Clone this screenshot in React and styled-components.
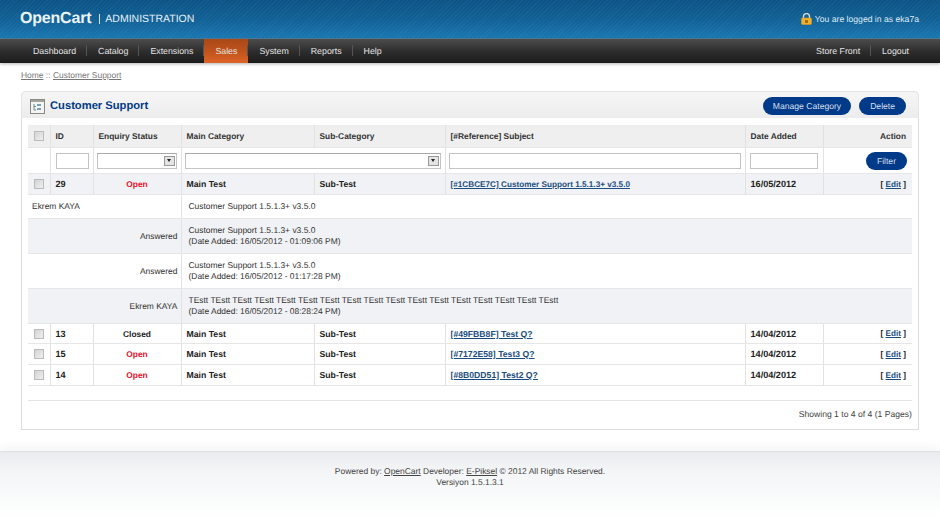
import React from 'react';
import styled, { createGlobalStyle } from 'styled-components';

const tickets = [
  { id: 13, status: 'Closed', ref: '[#49FBB8F] Test Q?', date: '14/04/2012' },
  { id: 15, status: 'Open', ref: '[#7172E58] Test3 Q?', date: '14/04/2012' },
  { id: 14, status: 'Open', ref: '[#8B0DD51] Test2 Q?', date: '14/04/2012' },
];

const replies = [
  { who: 'Ekrem KAYA', left: true, height: 24, lines: ['Customer Support 1.5.1.3+ v3.5.0'] },
  { who: 'Answered', shade: true, height: 35, lines: ['Customer Support 1.5.1.3+ v3.5.0', '(Date Added: 16/05/2012 - 01:09:06 PM)'] },
  { who: 'Answered', height: 35, lines: ['Customer Support 1.5.1.3+ v3.5.0', '(Date Added: 16/05/2012 - 01:17:28 PM)'] },
  { who: 'Ekrem KAYA', shade: true, height: 35, lines: ['TEstt TEstt TEstt TEstt TEstt TEstt TEstt TEstt TEstt TEstt TEstt TEstt TEstt TEstt TEstt TEstt TEstt', '(Date Added: 16/05/2012 - 08:28:24 PM)'] },
];

function LockIcon() {
  return (
    <svg width="11" height="12" viewBox="0 0 11 12">
      <path d="M2.5 6V3.6a3 3 0 0 1 6 0V6" fill="none" stroke="#d8d8d0" strokeWidth="1.4" />
      <rect x="0.5" y="5" width="10" height="6.5" rx="1" fill="#f0b030" stroke="#d99a20" strokeWidth="0.6" />
      <rect x="4" y="7" width="3" height="3" fill="#a86d10" />
    </svg>
  );
}

function PageIcon() {
  return (
    <svg width="15" height="15" viewBox="0 0 15 15">
      <rect x="0.5" y="0.5" width="14" height="14" fill="#f4f4f2" stroke="#8a8a84" />
      <rect x="1" y="1" width="13" height="2" fill="#a4a49e" />
      <path d="M4 5v6h2M4 7.5h2" fill="none" stroke="#6f8796" strokeWidth="1" />
      <rect x="7" y="5" width="4" height="2" fill="#7da0b4" />
      <rect x="7" y="9" width="4" height="2" fill="#7da0b4" />
    </svg>
  );
}

function App() {
  return (
    <Page>
      <GlobalStyle />
      <Header>
        <Brand>
          <Logo>OpenCart</Logo>
          <Admin>ADMINISTRATION</Admin>
        </Brand>
        <Logged>
          <LockIcon />
          You are logged in as eka7a
        </Logged>
      </Header>
      <Nav>
        <NavGroup>
          {['Dashboard', 'Catalog', 'Extensions', 'Sales', 'System', 'Reports', 'Help'].map((item) => (
            <NavItem key={item} $active={item === 'Sales'}>{item}</NavItem>
          ))}
        </NavGroup>
        <NavGroup>
          <NavItem>Store Front</NavItem>
          <NavItem>Logout</NavItem>
        </NavGroup>
      </Nav>
      <Content>
        <Breadcrumb>
          <a href="#home">Home</a> :: <a href="#support">Customer Support</a>
        </Breadcrumb>
        <Box>
          <Heading>
            <Title>
              <PageIcon />
              <h1>Customer Support</h1>
            </Title>
            <Buttons>
              <Button>Manage Category</Button>
              <Button $wide>Delete</Button>
            </Buttons>
          </Heading>
          <BoxBody>
            <List>
              <colgroup>
                <col style={{ width: 22 }} />
                <col style={{ width: 43 }} />
                <col style={{ width: 88 }} />
                <col style={{ width: 133 }} />
                <col style={{ width: 131 }} />
                <col style={{ width: 300 }} />
                <col style={{ width: 78 }} />
                <col style={{ width: 89 }} />
              </colgroup>
              <thead>
                <HeadRow>
                  <Cell $center><Check type="checkbox" /></Cell>
                  <Cell>ID</Cell>
                  <Cell>Enquiry Status</Cell>
                  <Cell>Main Category</Cell>
                  <Cell>Sub-Category</Cell>
                  <Cell>[#Reference] Subject</Cell>
                  <Cell>Date Added</Cell>
                  <Cell $right>Action</Cell>
                </HeadRow>
              </thead>
              <tbody>
                <FilterRow>
                  <Cell />
                  <FilterCell $l={5} $r={4}><TextInput /></FilterCell>
                  <FilterCell><SelectBox><select /><SelectArrow /></SelectBox></FilterCell>
                  <FilterCell colSpan={2}><SelectBox><select /><SelectArrow /></SelectBox></FilterCell>
                  <FilterCell><TextInput /></FilterCell>
                  <FilterCell $l={4} $r={5}><TextInput /></FilterCell>
                  <FilterCell $r={5}><FilterAction><Button $wide>Filter</Button></FilterAction></FilterCell>
                </FilterRow>
                <TicketRow $shade $height={21}>
                  <Cell $center><Check type="checkbox" /></Cell>
                  <NumCell>29</NumCell>
                  <Status $open>Open</Status>
                  <Cell>Main Test</Cell>
                  <Cell>Sub-Test</Cell>
                  <Cell><Subject href="#t29" $tight>[#1CBCE7C] Customer Support 1.5.1.3+ v3.5.0</Subject></Cell>
                  <NumCell>16/05/2012</NumCell>
                  <ActionCell $right>[ <a href="#e29">Edit</a> ]</ActionCell>
                </TicketRow>
                {replies.map((reply, i) => (
                  <ReplyRow key={i} $shade={reply.shade} $height={reply.height}>
                    <Who colSpan={3} $left={reply.left}>{reply.who}</Who>
                    <Message colSpan={5}>
                      {reply.lines.map((line) => <div key={line}>{line}</div>)}
                    </Message>
                  </ReplyRow>
                ))}
                {tickets.map((t) => (
                  <TicketRow key={t.id} $height={t.id === 13 ? 20 : 21}>
                    <Cell $center><Check type="checkbox" /></Cell>
                    <NumCell>{t.id}</NumCell>
                    <Status $open={t.status === 'Open'}>{t.status}</Status>
                    <Cell>Main Test</Cell>
                    <Cell>Sub-Test</Cell>
                    <Cell><Subject href="#t">{t.ref}</Subject></Cell>
                    <NumCell>{t.date}</NumCell>
                    <ActionCell $right>[ <a href="#e">Edit</a> ]</ActionCell>
                  </TicketRow>
                ))}
              </tbody>
            </List>
            <Pagination>Showing 1 to 4 of 4 (1 Pages)</Pagination>
          </BoxBody>
        </Box>
      </Content>
      <Footer>
        <div>Powered by: <a href="#oc">OpenCart</a> Developer: <a href="#ep">E-Piksel</a> © 2012 All Rights Reserved.</div>
        <div>Versiyon 1.5.1.3.1</div>
      </Footer>
    </Page>
  );
}

export default App;

const GlobalStyle = createGlobalStyle`
html, body {
  margin: 0;
  padding: 0;
  background: #fff;
}
body {
  font-family: "Liberation Sans", Arial, sans-serif;
  font-size: 8.45px;
  text-rendering: geometricPrecision;
  color: #222;
}
`;

const Page = styled.div`
height: 525px;
display: flex;
flex-direction: column;
overflow: hidden;
`;

const Header = styled.div`
height: 38px;
padding: 0 21px 0 20px;
display: flex;
align-items: center;
justify-content: space-between;
background:
  repeating-linear-gradient(135deg, rgba(255,255,255,0.035) 0 1px, transparent 1px 3px),
  linear-gradient(to bottom, #0d5486 0%, #116095 50%, #1a77b2 100%);
border-bottom: 1px solid #4e7f9c;
`;

const Brand = styled.div`
display: flex;
align-items: center;
color: #fff;
`;

const Logo = styled.div`
font-size: 16px;
font-weight: bold;
letter-spacing: -0.2px;
color: #eaf3f9;
`;

const Admin = styled.div`
margin-left: 8px;
padding-left: 5px;
border-left: 1px solid #cfe0ec;
font-size: 10.5px;
line-height: 10px;
color: #e6f0f7;
`;

const Logged = styled.div`
display: flex;
align-items: center;
gap: 3px;
font-size: 8.65px;
color: #dde9f2;
`;

const Nav = styled.div`
height: 24px;
padding: 0 20px 0 22px;
display: flex;
justify-content: space-between;
font-size: 8.8px;
background: linear-gradient(to bottom, #4c4c4c 0%, #2e2e2e 50%, #1c1c1c 100%);
box-shadow: 0 1px 3px rgba(0, 0, 0, 0.3);
`;

const NavGroup = styled.div`
display: flex;
`;

const NavItem = styled.div`
padding: 0 11px;
line-height: 24px;
color: #e4e4e4;
background: ${(p) => (p.$active ? 'linear-gradient(to bottom, #a84818 0%, #c2541c 55%, #dc6428 100%)' : 'none')};
position: relative;
&:not(:last-child)::after {
  content: "";
  position: absolute;
  right: 0;
  top: 6px;
  height: 11px;
  border-right: 1px solid #555;
}
`;

const Content = styled.div`
padding: 7px 21px 0;
flex: 0 0 388px;
box-sizing: border-box;
`;

const Breadcrumb = styled.div`
height: 21px;
line-height: 10px;
color: #888;
a {
  color: #777;
}
`;

const Box = styled.div`
width: 898px;
box-sizing: border-box;
height: 339px;
border: 1px solid #dcdcdc;
border-top: none;
border-radius: 5px 5px 0 0;
`;

const Heading = styled.div`
height: 27px;
margin: 0 -1px;
padding: 2px 12px 0 8px;
display: flex;
align-items: center;
justify-content: space-between;
background: linear-gradient(to bottom, #f6f6f6, #ececec);
border: 1px solid #e4e4e4;
border-bottom: none;
border-radius: 5px 5px 0 0;
box-sizing: border-box;
`;

const Title = styled.div`
display: flex;
align-items: center;
gap: 5px;
h1 {
  margin: 0;
  font-size: 11.2px;
  font-weight: bold;
  color: #003a88;
}
`;

const Buttons = styled.div`
display: flex;
gap: 8px;
`;

const Button = styled.button`
display: inline-block;
height: 18px;
padding: 0 ${(p) => (p.$wide ? 11 : 10)}px;
border: none;
border-radius: 9px;
background: #003a88;
color: #d6dfec;
font-family: inherit;
font-size: 8.6px;
text-rendering: inherit;
`;

const BoxBody = styled.div`
padding: 7px 6px 0;
`;

const List = styled.table`
width: 884px;
table-layout: fixed;
border-collapse: collapse;
border-top: 1px solid #eee;
border-bottom: 1px solid #ddd;
font-size: 8.7px;
font-weight: bold;
a {
  color: #1b4d80;
}
`;

const Cell = styled.td`
padding: 0 5px;
border-right: 1px solid #e2e2e2;
border-bottom: 1px solid #e6e6e6;
text-align: ${(p) => (p.$right ? 'right' : p.$center ? 'center' : 'left')};
white-space: nowrap;
&:last-child {
  border-right: none;
  padding-right: 6px;
}
`;

const NumCell = styled(Cell)`
font-size: 9.15px;
`;

const ActionCell = styled(Cell)`
font-size: 8.2px;
`;

const HeadRow = styled.tr`
height: 22px;
background: #efefef;
color: #333;
font-size: 8.4px;
${Cell} {
  padding-bottom: 2px;
}
`;

const FilterRow = styled.tr`
height: 26px;
`;

const FilterCell = styled(Cell)`
padding: 0 ${(p) => p.$r ?? 4}px 0 ${(p) => p.$l ?? 3}px;
&:last-child {
  padding-right: ${(p) => p.$r ?? 4}px;
}
`;

const FilterAction = styled.div`
display: flex;
justify-content: flex-end;
`;

const TicketRow = styled.tr`
height: ${(p) => p.$height}px;
background: ${(p) => (p.$shade ? '#f1f2f5' : '#fff')};
`;

const Status = styled(Cell)`
text-align: center;
font-size: 8.4px;
color: ${(p) => (p.$open ? '#e8112d' : '#222')};
`;

const Subject = styled.a`
font-size: ${(p) => (p.$tight ? '8.2px' : '8.66px')};
`;

const ReplyRow = styled.tr`
height: ${(p) => p.$height}px;
background: ${(p) => (p.$shade ? '#f1f2f5' : '#fff')};
font-size: 8.45px;
font-weight: normal;
color: #333;
`;

const Who = styled.td`
padding: 0 3px 0 4px;
border-right: 1px solid #e2e2e2;
border-bottom: 1px solid #e6e6e6;
line-height: 11px;
text-align: ${(p) => (p.$left ? 'left' : 'right')};
`;

const Message = styled.td`
padding: 0 7px;
border-bottom: 1px solid #e6e6e6;
line-height: 11px;
`;

const Check = styled.input`
appearance: none;
display: block;
margin: 0 auto;
width: 10px;
height: 10px;
border: 1px solid #bbb;
background: linear-gradient(135deg, #d4d4d4, #efefef);
`;

const TextInput = styled.input`
display: block;
width: 100%;
height: 16px;
box-sizing: border-box;
border: 1px solid #c4c4c4;
padding: 0 2px;
`;

const SelectBox = styled.div`
display: flex;
align-items: center;
height: 14px;
border: 1px solid #c4c4c4;
border-top-color: #aaa;
padding-right: 1px;
background: #fff;
select {
  flex: 1;
  min-width: 0;
  height: 100%;
  appearance: none;
  border: none;
  background: transparent;
}
`;

const SelectArrow = styled.span`
flex: none;
width: 11px;
height: 10px;
border: 1px solid #999;
background: #e4e4e4;
box-sizing: border-box;
display: flex;
align-items: center;
justify-content: center;
&::after {
  content: "";
  border-left: 2.5px solid transparent;
  border-right: 2.5px solid transparent;
  border-top: 3px solid #222;
}
`;

const Pagination = styled.div`
margin-top: 14px;
height: 27px;
border-top: 1px solid #e4e4e4;
font-size: 8.6px;
line-height: 27px;
text-align: right;
color: #444;
`;

const Footer = styled.div`
flex: 1;
padding-top: 14px;
text-align: center;
line-height: 11px;
color: #444;
background: linear-gradient(to bottom, #e9ebee 0%, #f3f5f6 25%, #fff 90%);
border-top: 1px solid #dfe2e4;
box-shadow: 0 -4px 8px rgba(210, 214, 218, 0.25);
a {
  color: #444;
}
`;
